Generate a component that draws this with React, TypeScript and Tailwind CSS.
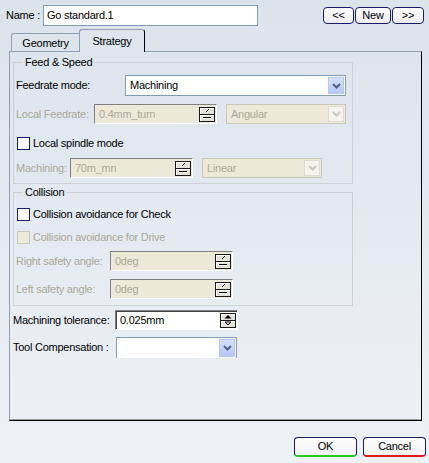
import clsx from "clsx";
import type { ReactNode } from "react";

const FONT = "font-['Liberation_Sans',Arial,sans-serif]";
const DIM = "text-[#aca899]";

function Chevron({ color }: { color: string }) {
  return (
    <svg width="9" height="6" viewBox="0 0 9 6">
      <path d="M1 1 L4.5 4.5 L8 1" fill="none" stroke={color} strokeWidth="2" />
    </svg>
  );
}

function Combo({
  value,
  disabled,
  className,
}: {
  value?: string;
  disabled?: boolean;
  className: string;
}) {
  return (
    <div
      className={clsx(
        "flex items-stretch border p-px",
        disabled ? "border-[#c9c7ba] bg-[#ece9d8]" : "border-[#7f9db9] bg-white",
        className,
      )}
    >
      <span className={clsx("flex flex-1 items-center pl-[3px]", disabled && DIM)}>{value}</span>
      <span
        className={clsx(
          "flex w-[16px] items-center justify-center border",
          disabled
            ? "border-[#dddbd0] bg-[#f4f3ee]"
            : "border-[#b4c7f4] bg-gradient-to-b from-[#d3dffd] to-[#b5c8f7]",
        )}
      >
        <Chevron color={disabled ? "#c9c7ba" : "#4d6185"} />
      </span>
    </div>
  );
}

function SpinButtons({ disabled }: { disabled?: boolean }) {
  const btn =
    "flex h-[8px] items-center justify-center border border-[#1a1a1a] bg-[#e4e1d6] shadow-[inset_1px_1px_0_#ffffff]";
  return (
    <div className="mr-px flex w-[16px] flex-col">
      <span className={btn}>
        {disabled ? (
          <svg width="8" height="5" viewBox="0 0 8 5">
            <path d="M3 4 L6 1" stroke="#000" strokeWidth="1" />
          </svg>
        ) : (
          <svg width="8" height="5" viewBox="0 0 8 5">
            <path d="M0.5 4.5 L4 1 L7.5 4.5 Z" fill="#000" />
          </svg>
        )}
      </span>
      <span className={clsx(btn, "-mt-px")}>
        {disabled ? (
          <svg width="10" height="5" viewBox="0 0 10 5">
            <path d="M1 2.5 H9" stroke="#000" strokeWidth="1" />
            <path d="M1 3.5 H9" stroke="#fff" strokeWidth="1" />
          </svg>
        ) : (
          <svg width="8" height="5" viewBox="0 0 8 5">
            <path d="M1 1 L4 4 L7 1 Z" fill="none" stroke="#000" strokeWidth="1" />
          </svg>
        )}
      </span>
    </div>
  );
}

function Spin({
  value,
  disabled,
  className,
}: {
  value: string;
  disabled?: boolean;
  className: string;
}) {
  return (
    <div
      className={clsx(
        "flex items-center border border-t-[#808080] border-l-[#808080] border-r-white border-b-white",
        disabled ? "bg-[#ece9d8]" : "bg-white shadow-[inset_1px_1px_0_#404040]",
        className,
      )}
    >
      <span className={clsx("flex-1 pl-[4px]", disabled && DIM)}>{value}</span>
      <SpinButtons disabled={disabled} />
    </div>
  );
}

function Check({ label, disabled }: { label: string; disabled?: boolean }) {
  return (
    <div className="flex h-[13px] items-center">
      <span
        className={clsx(
          "ml-px h-[13px] w-[13px] border",
          disabled ? "border-[#cac8bb] bg-[#ece9d8]" : "border-[#1c1c78] bg-white",
        )}
      />
      <span className={clsx("ml-[3px]", disabled && DIM)}>{label}</span>
    </div>
  );
}

function NavButton({ children, className }: { children: ReactNode; className: string }) {
  return (
    <button
      type="button"
      className={clsx(
        "flex h-[17px] items-center justify-center rounded-[4px] border border-[#1b1b6b] bg-gradient-to-b from-white to-[#ececf3]",
        className,
      )}
    >
      {children}
    </button>
  );
}

function Group({ title, children, className }: { title: string; children: ReactNode; className?: string }) {
  return (
    <fieldset className={clsx("w-[340px] border border-[#cdd1d5] px-[2px]", className)}>
      <legend className="ml-[7px] px-[2px] leading-[13px]">{title}</legend>
      {children}
    </fieldset>
  );
}

export default function App() {
  return (
    <div
      className={`flex h-[463px] w-[429px] flex-col bg-gradient-to-b from-[#dbe3eb] to-[#eef1f5] text-[11px] leading-[13px] tracking-[-0.25px] text-black ${FONT}`}
    >
      {/* Name row */}
      <div className="mt-[5px] flex h-[21px] items-center">
        <span className="ml-[6px] w-[37px]">Name :</span>
        <div className="flex h-[21px] w-[215px] items-center border border-[#7f9db9] bg-white pl-[3px]">
          Go standard.1
        </div>
        <div className="ml-auto mr-[5px] flex gap-px">
          <NavButton className="w-[31px]">&lt;&lt;</NavButton>
          <NavButton className="w-[36px]">New</NavButton>
          <NavButton className="w-[32px]">&gt;&gt;</NavButton>
        </div>
      </div>

      {/* Tabs */}
      <div className="relative z-10 mt-[3px] -mb-px ml-[11px] flex h-[23px] items-end">
        <div className="flex h-[19px] w-[68px] items-center justify-center rounded-tl-[3px] border border-r-0 border-b-0 border-[#8fa0b4]">
          Geometry
        </div>
        <div className="flex h-[23px] w-[66px] justify-center rounded-t-[3px] border border-b-0 border-t-[#8fa0b4] border-l-[#8fa0b4] border-r-black bg-[#dee5ed] pt-[5px]">
          Strategy
        </div>
      </div>

      {/* Panel */}
      <div className="ml-[9px] flex h-[370px] w-[413px] flex-col border border-t-[#8fa0b4] border-l-[#8fa0b4] border-r-black border-b-black pl-[3px] pt-[4px] shadow-[inset_0_-1px_0_#a0a0a0]">
        <Group title="Feed & Speed" className="pb-[5px]">
          <div className="mt-[6px] flex h-[21px] items-center">
            <span className="w-[109px]">Feedrate mode:</span>
            <Combo value="Machining" className="h-[21px] w-[221px]" />
          </div>
          <div className="mt-[8px] flex h-[20px] items-center">
            <span className={clsx("w-[78px]", DIM)}>Local Feedrate:</span>
            <Spin value="0.4mm_turn" disabled className="h-[20px] w-[123px]" />
            <Combo value="Angular" disabled className="ml-[9px] h-[20px] w-[120px]" />
          </div>
          <div className="mt-[13px]">
            <Check label="Local spindle mode" />
          </div>
          <div className="mt-[8px] flex h-[20px] items-center">
            <span className={clsx("w-[54px]", DIM)}>Machining:</span>
            <Spin value="70m_mn" disabled className="h-[20px] w-[123px]" />
            <Combo value="Linear" disabled className="ml-[9px] h-[20px] w-[120px]" />
          </div>
        </Group>

        <Group title="Collision" className="mt-[2px] pb-[6px]">
          <div className="mt-[9px]">
            <Check label="Collision avoidance for Check" />
          </div>
          <div className="mt-[10px]">
            <Check label="Collision avoidance for Drive" disabled />
          </div>
          <div className="mt-[7px] flex h-[20px] items-center">
            <span className={clsx("w-[94px]", DIM)}>Right safety angle:</span>
            <Spin value="0deg" disabled className="h-[20px] w-[123px]" />
          </div>
          <div className="mt-[8px] flex h-[20px] items-center">
            <span className={clsx("w-[94px]", DIM)}>Left safety angle:</span>
            <Spin value="0deg" disabled className="h-[20px] w-[123px]" />
          </div>
        </Group>

        <div className="mt-[4px] flex h-[20px] items-center">
          <span className="w-[102px]">Machining tolerance:</span>
          <Spin value="0.025mm" className="h-[20px] w-[123px]" />
        </div>
        <div className="mt-[7px] flex h-[21px] items-center">
          <span className="w-[103px]">Tool Compensation :</span>
          <Combo className="h-[21px] w-[121px] border-b-0" />
        </div>
      </div>

      {/* Dialog buttons */}
      <div className="mt-[16px] flex justify-end gap-[6px] pr-[3px]">
        <button
          type="button"
          className="h-[20px] w-[63px] rounded-[4px] border border-[#1b1b6b] border-b-2 border-b-[#22cc22] bg-gradient-to-b from-white to-[#f2f2f7]"
        >
          OK
        </button>
        <button
          type="button"
          className="h-[20px] w-[63px] rounded-[4px] border border-[#1b1b6b] border-b-2 border-b-[#e01a1a] bg-gradient-to-b from-white to-[#f2f2f7]"
        >
          Cancel
        </button>
      </div>
    </div>
  );
}
